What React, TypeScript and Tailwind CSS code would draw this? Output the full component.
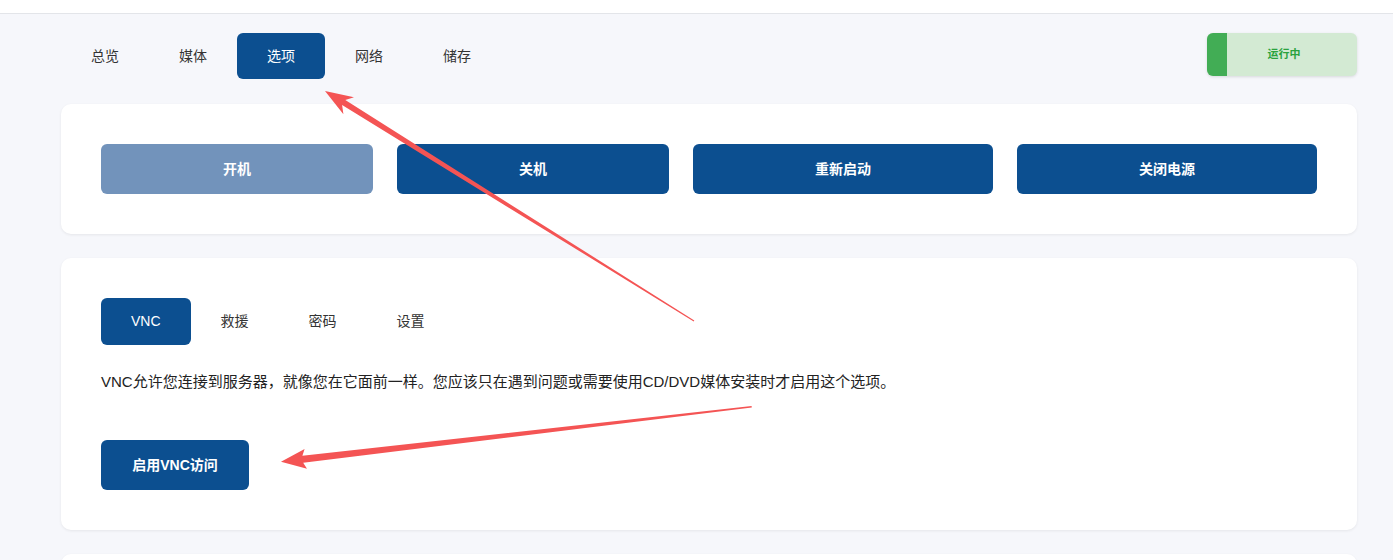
import React from "react";

const font = { fontFamily: '"Liberation Sans", "Noto Sans CJK SC", sans-serif' };

export default function App() {
  const tabs = ["总览", "媒体", "选项", "网络", "储存"];
  const subTabs = ["VNC", "救援", "密码", "设置"];
  return (
    <div className="relative min-h-[560px] w-full overflow-hidden bg-[#f6f7fb] text-[14px] text-[#222]" style={font}>
      <div className="h-[14px] border-b border-[#e3e5e9] bg-white" />
      <div className="ml-[61px] w-[1296px] pt-[19px]">
        <div className="flex items-start justify-between">
          <div className="flex">
            {tabs.map((t, i) => (
              <div
                key={t}
                className={
                  "flex h-[46px] w-[88px] items-center justify-center rounded-[6px] " +
                  (i === 2 ? "bg-[#0c4f90] text-white" : "text-[#333]")
                }
              >
                {t}
              </div>
            ))}
          </div>
          <div className="flex h-[43px] w-[150px] overflow-hidden rounded-[6px] bg-[#d3ead3] shadow-[0_1px_3px_rgba(0,0,0,0.12)]">
            <div className="w-[20px] bg-[#42ad55]" />
            <div className="flex flex-1 items-center justify-center pr-[16px] text-[11px] font-bold text-[#2aa23e]">运行中</div>
          </div>
        </div>

        <div className="mt-[25px] rounded-[10px] bg-white px-[40px] py-[40px] shadow-[0_1px_3px_rgba(0,0,0,0.07)]">
          <div className="flex gap-[24px]">
            <div className="flex h-[50px] flex-auto items-center justify-center rounded-[6px] bg-[#7293bb] font-bold text-white">开机</div>
            <div className="flex h-[50px] flex-auto items-center justify-center rounded-[6px] bg-[#0c4f90] font-bold text-white">关机</div>
            <div className="flex h-[50px] flex-auto items-center justify-center rounded-[6px] bg-[#0c4f90] font-bold text-white">重新启动</div>
            <div className="flex h-[50px] flex-auto items-center justify-center rounded-[6px] bg-[#0c4f90] font-bold text-white">关闭电源</div>
          </div>
        </div>

        <div className="mt-[24px] rounded-[10px] bg-white px-[40px] pb-[40px] pt-[40px] shadow-[0_1px_3px_rgba(0,0,0,0.07)]">
          <div className="flex">
            {subTabs.map((t, i) => (
              <div
                key={t}
                className={
                  "flex h-[47px] items-center justify-center rounded-[6px] px-[30px] " +
                  (i === 0 ? "bg-[#0c4f90] font-medium text-white" : "text-[#333]")
                }
              >
                {t}
              </div>
            ))}
          </div>
          <p className="mt-[27px] text-[15px] leading-[20px] text-[#222]">
            VNC允许您连接到服务器，就像您在它面前一样。您应该只在遇到问题或需要使用CD/DVD媒体安装时才启用这个选项。
          </p>
          <div className="mt-[48px] flex">
            <div className="flex h-[50px] w-[148px] items-center justify-center rounded-[6px] bg-[#0c4f90] font-bold text-white">
              启用VNC访问
            </div>
          </div>
        </div>

        <div className="mt-[24px] h-[40px] rounded-[10px] bg-white shadow-[0_1px_3px_rgba(0,0,0,0.07)]" />
      </div>

      <svg className="pointer-events-none absolute left-0 top-0" width="1393" height="560" viewBox="0 0 1393 560">
        <polygon
          fill="#f45454"
          points="325,91 354,97.3 345.3,100.1 694.3,320.6 693.7,321.4 342.1,105.1 343.4,114.3"
        />
        <polygon
          fill="#f45454"
          points="281,461.7 304.6,448.9 302.4,455.7 751.6,406 751.8,407.4 303.2,462.7 307,468.7"
        />
      </svg>
    </div>
  );
}
